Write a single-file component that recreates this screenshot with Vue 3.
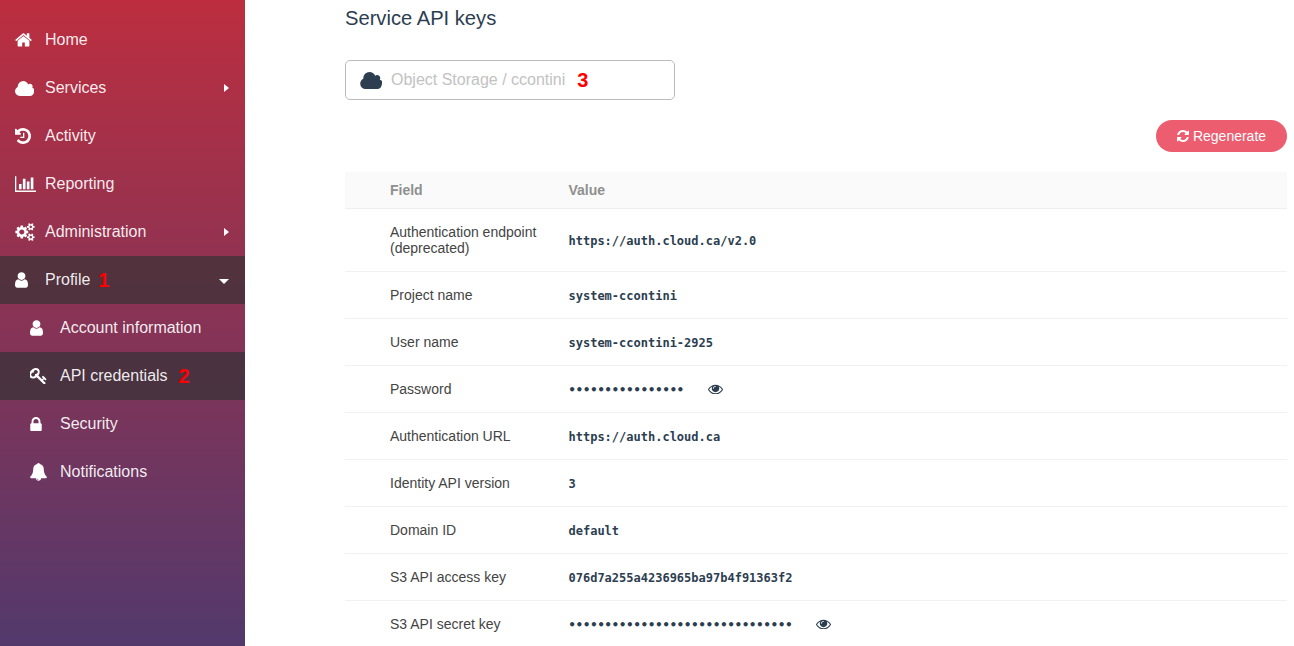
<script setup>
const icons = {
  home: { vb: '64 224 1664 1312', w: 17, h: 13.4, d: 'M1472 992v480q0 26-19 45t-45 19h-384v-384h-256v384h-384q-26 0-45-19t-19-45v-480q0-1 .5-3t.5-3l575-474 575 474q1 2 1 6zm223-69l-62 74q-8 9-21 11h-3q-13 0-21-7l-692-577-692 577q-12 8-24 7-13-2-21-11l-62-74q-8-10-7-23.5t11-21.5l719-599q32-26 76-26t76 26l244 204v-195q0-14 9-23t23-9h192q14 0 23 9t9 23v408l219 182q10 8 11 21.5t-7 23.5z' },
  cloud: { vb: '-64 128 1792 1408', w: 19, h: 15, d: 'M1728 1152q0 159-112.5 271.5t-271.5 112.5h-960q-185 0-316.5-131.5t-131.5-316.5q0-132 71-241.5t187-163.5q-2-28-2-43 0-212 150-362t362-150q158 0 286.5 88t187.5 230q70-62 166-62 106 0 181 75t75 181q0 75-41 138 129 30 213 134.5t84 239.5z' },
  history: { vb: '128 128 1536 1536', w: 16, h: 16, d: 'M1664 896q0 156-61 298t-164 245-245 164-298 61q-172 0-327-72.5t-264-204.5q-7-10-6.5-22.5t8.5-20.5l137-138q10-9 25-9 16 2 23 12 73 95 179 147t225 52q104 0 198.5-40.5t163.5-109.5 109.5-163.5 40.5-198.5-40.5-198.5-109.5-163.5-163.5-109.5-198.5-40.5q-98 0-188 35.5t-160 101.5l137 138q31 30 14 69-17 40-59 40h-448q-26 0-45-19t-19-45v-448q0-42 40-59 39-17 69 14l130 129q107-101 244.5-156.5t284.5-55.5q156 0 298 61t245 164 164 245 61 298zm-640-288v448q0 14-9 23t-23 9h-320q-14 0-23-9t-9-23v-64q0-14 9-23t23-9h224v-352q0-14 9-23t23-9h64q14 0 23 9t9 23z' },
  chart: { vb: '0 128 2048 1536', w: 21, h: 16, d: 'M640 896v512h-256v-512h256zm384-512v1024h-256v-1024h256zm1024 1152v128h-2048v-1536h128v1408h1920zm-640-896v768h-256v-768h256zm384-384v1152h-256v-1152h256z' },
  cogs: { vb: '0 0 1920 1792', w: 20, h: 18, d: 'M896 896q0-106-75-181t-181-75-181 75-75 181 75 181 181 75 181-75 75-181zm768 512q0-52-38-90t-90-38-90 38-38 90q0 53 37.5 90.5t90.5 37.5 90.5-37.5 37.5-90.5zm0-1024q0-52-38-90t-90-38-90 38-38 90q0 53 37.5 90.5t90.5 37.5 90.5-37.5 37.5-90.5zm-384 421v185q0 10-7 19.5t-16 10.5l-155 24q-11 35-32 76 34 48 90 115 7 11 7 20 0 12-7 19-23 30-82.5 89.5t-78.5 59.5q-11 0-21-7l-115-90q-37 19-77 31-11 108-23 155-7 24-30 24h-186q-11 0-20-7.5t-10-17.5l-23-153q-34-10-75-31l-118 89q-7 7-20 7-11 0-21-8-144-133-144-160 0-9 7-19 10-14 41-53t47-61q-23-44-35-82l-152-24q-10-1-17-9.5t-7-19.5v-185q0-10 7-19.5t16-10.5l155-24q11-35 32-76-34-48-90-115-7-11-7-20 0-12 7-20 22-30 82-89t79-59q11 0 21 7l115 90q34-18 77-32 11-108 23-154 7-24 30-24h186q11 0 20 7.5t10 17.5l23 153q34 10 75 31l118-89q8-7 20-7 11 0 21 8 144 133 144 160 0 8-7 19-12 16-42 54t-45 60q23 48 34 82l152 23q10 2 17 10.5t7 19.5zm640 533v140q0 16-149 31-12 27-30 52 51 113 51 138 0 4-4 7-122 71-124 71-8 0-46-47t-52-68q-20 2-30 2t-30-2q-14 21-52 68t-46 47q-2 0-124-71-4-3-4-7 0-25 51-138-18-25-30-52-149-15-149-31v-140q0-16 149-31 13-29 30-52-51-113-51-138 0-4 4-7 4-2 35-20t59-34 30-16q8 0 46 46.5t52 67.5q20-2 30-2t30 2q51-71 92-112l6-2q4 0 124 70 4 3 4 7 0 25-51 138 17 23 30 52 149 15 149 31zm0-1024v140q0 16-149 31-12 27-30 52 51 113 51 138 0 4-4 7-122 71-124 71-8 0-46-47t-52-68q-20 2-30 2t-30-2q-14 21-52 68t-46 47q-2 0-124-71-4-3-4-7 0-25 51-138-18-25-30-52-149-15-149-31v-140q0-16 149-31 13-29 30-52-51-113-51-138 0-4 4-7 4-2 35-20t59-34 30-16q8 0 46 46.5t52 67.5q20-2 30-2t30 2q51-71 92-112l6-2q4 0 124 70 4 3 4 7 0 25-51 138 17 23 30 52 149 15 149 31z' },
  user: { vb: '256 128 1280 1536', w: 13, h: 16, d: 'M1536 1399q0 109-62.5 187t-150.5 78h-854q-88 0-150.5-78t-62.5-187q0-85 8.5-160.5t31.5-152 58.5-131 94-89 134.5-34.5q131 128 313 128t313-128q76 0 134.5 34.5t94 89 58.5 131 31.5 152 8.5 160.5zm-256-887q0 159-112.5 271.5t-271.5 112.5-271.5-112.5-112.5-271.5 112.5-271.5 271.5-112.5 271.5 112.5 112.5 271.5z' },
  key: { vb: '128 128 1555 1555', w: 17, h: 16, d: 'M832 512q0-80-56-136t-136-56-136 56-56 136q0 42 19 83-41-19-83-19-80 0-136 56t-56 136 56 136 136 56 136-56 56-136q0-42-19-83 41 19 83 19 80 0 136-56t56-136zm851 704q0 17-49 66t-66 49q-9 0-28.5-16t-36.5-33-38.5-40-24.5-26l-96 96 220 220q28 28 28 68 0 42-39 81t-81 39q-40 0-68-28l-671-671q-176 131-365 131-163 0-265.5-102.5t-102.5-265.5q0-160 95-313t248-248 313-95q163 0 265.5 102.5t102.5 265.5q0 189-131 365l355 355 96-96q-3-3-26-24.5t-40-38.5-33-36.5-16-28.5q0-17 49-66t66-49q13 0 23 10 6 6 46 44.5t82 79.5 86.5 86 73 78 28.5 41z' },
  lock: { vb: '320 128 1152 1408', w: 12, h: 14, d: 'M640 768h512v-192q0-106-75-181t-181-75-181 75-75 181v192zm832 96v576q0 40-28 68t-68 28h-960q-40 0-68-28t-28-68v-576q0-40 28-68t68-28h32v-192q0-184 132-316t316-132 316 132 132 316v192h32q40 0 68 28t28 68z' },
  bell: { vb: '64 64 1664 1728', w: 17, h: 18, d: 'M912 1696q0-16-16-16-59 0-101.5-42.5t-42.5-101.5q0-16-16-16t-16 16q0 73 51.5 124.5t124.5 51.5q16 0 16-16zm816-288q0 52-38 90t-90 38h-448q0 106-75 181t-181 75-181-75-75-181h-448q-52 0-90-38t-38-90q50-42 91-88t85-119.5 74.5-158.5 50-206 19.5-260q0-152 117-282.5t307-158.5q-8-19-8-39 0-40 28-68t68-28 68 28 28 68q0 20-8 39 190 28 307 158.5t117 282.5q0 139 19.5 260t50 206 74.5 158.5 85 119.5 91 88z' },
  refresh: { vb: '128 128 1536 1536', w: 12, h: 12, d: 'M1639 1056q0 5-1 7-64 268-268 434.5t-478 166.5q-146 0-282.5-55t-243.5-157l-129 129q-19 19-45 19t-45-19-19-45v-448q0-26 19-45t45-19h448q26 0 45 19t19 45-19 45l-137 137q71 66 161 102t187 36q134 0 250-65t186-179q11-17 53-117 8-23 30-23h192q13 0 22.5 9.5t9.5 22.5zm25-800v448q0 26-19 45t-45 19h-448q-26 0-45-19t-19-45 19-45l138-138q-148-137-349-137-134 0-250 65t-186 179q-11 17-53 117-8 23-30 23h-199q-13 0-22.5-9.5t-9.5-22.5v-7q65-268 270-434.5t480-166.5q146 0 284 55.5t245 156.5l130-129q19-19 45-19t45 19 19 45z' },
  eye: { vb: '0 320 1792 1152', w: 15, h: 10, d: 'M1664 960q-152-236-381-353 61 104 61 225 0 185-131.5 316.5t-316.5 131.5-316.5-131.5-131.5-316.5q0-121 61-225-229 117-381 353 133 205 333.5 326.5t434.5 121.5 434.5-121.5 333.5-326.5zm-720-384q0-20-14-34t-34-14q-125 0-214.5 89.5t-89.5 214.5q0 20 14 34t34 14 34-14 14-34q0-86 61-147t147-61q20 0 34-14t14-34zm848 384q0 34-20 69-140 230-376.5 368.5t-499.5 138.5-499.5-139-376.5-368q-20-35-20-69t20-69q140-229 376.5-368t499.5-139 499.5 139 376.5 368q20 35 20 69z' }
}

const nav = [
  { label: 'Home', icon: 'home' },
  { label: 'Services', icon: 'cloud', caret: 'right' },
  { label: 'Activity', icon: 'history' },
  { label: 'Reporting', icon: 'chart' },
  { label: 'Administration', icon: 'cogs', caret: 'right' },
  { label: 'Profile', icon: 'user', caret: 'down', mark: '1', active: true },
  { label: 'Account information', icon: 'user', sub: true },
  { label: 'API credentials', icon: 'key', sub: true, mark: '2', active: true, gap: true },
  { label: 'Security', icon: 'lock', sub: true },
  { label: 'Notifications', icon: 'bell', sub: true }
]

const rows = [
  { field: 'Authentication endpoint (deprecated)', value: 'https://auth.cloud.ca/v2.0' },
  { field: 'Project name', value: 'system-ccontini' },
  { field: 'User name', value: 'system-ccontini-2925' },
  { field: 'Password', value: '•'.repeat(16), secret: true },
  { field: 'Authentication URL', value: 'https://auth.cloud.ca' },
  { field: 'Identity API version', value: '3' },
  { field: 'Domain ID', value: 'default' },
  { field: 'S3 API access key', value: '076d7a255a4236965ba97b4f91363f2' },
  { field: 'S3 API secret key', value: '•'.repeat(31), secret: true }
]
</script>

<template>
  <div class="page">
    <aside class="sidebar">
      <div
        v-for="item in nav"
        :key="item.label"
        class="nav-item"
        :class="{ sub: item.sub, active: item.active }"
      >
        <span class="nav-icon">
          <svg :viewBox="icons[item.icon].vb" :width="icons[item.icon].w" :height="icons[item.icon].h" fill="currentColor">
            <path :d="icons[item.icon].d" />
          </svg>
        </span>
        <span>{{ item.label }}</span>
        <span v-if="item.mark" class="mark nav-mark" :class="{ wide: item.gap }">{{ item.mark }}</span>
        <span v-if="item.caret" class="caret" :class="item.caret"></span>
      </div>
    </aside>

    <main class="content">
      <h2 class="title">Service API keys</h2>

      <div class="select">
        <svg :viewBox="icons.cloud.vb" width="22" height="17" fill="#2c3e50">
          <path :d="icons.cloud.d" />
        </svg>
        <span class="placeholder">Object Storage / ccontini</span>
        <span class="mark select-mark">3</span>
      </div>

      <div class="actions">
        <button class="regen">
          <svg :viewBox="icons.refresh.vb" :width="icons.refresh.w" :height="icons.refresh.h" fill="currentColor">
            <path :d="icons.refresh.d" />
          </svg>
          Regenerate
        </button>
      </div>

      <table class="keys">
        <thead>
          <tr>
            <th class="col-field">Field</th>
            <th>Value</th>
          </tr>
        </thead>
        <tbody>
          <tr v-for="row in rows" :key="row.field">
            <td class="col-field">{{ row.field }}</td>
            <td class="value">
              <span>{{ row.value }}</span>
              <svg v-if="row.secret" class="eye" :viewBox="icons.eye.vb" :width="icons.eye.w" :height="icons.eye.h" fill="currentColor">
                <path :d="icons.eye.d" />
              </svg>
            </td>
          </tr>
        </tbody>
      </table>
    </main>
  </div>
</template>

<style>
html, body {
  margin: 0;
  overflow: hidden;
}
</style>

<style scoped>
.page {
  display: flex;
  height: 646px;
  overflow: hidden;
  background: #fff;
  font-family: "Liberation Sans", Arial, sans-serif;
}

.sidebar {
  flex: 0 0 245px;
  box-sizing: border-box;
  padding-top: 16px;
  background: linear-gradient(180deg, #bc2e3f 0%, #52396c 100%);
}

.nav-item {
  display: flex;
  align-items: center;
  height: 48px;
  padding-left: 15px;
  color: rgba(255, 255, 255, 0.92);
  font-size: 16px;
}

.nav-item.sub {
  padding-left: 30px;
}

.nav-item.active {
  background: rgba(40, 50, 48, 0.6);
}

.nav-icon {
  display: flex;
  align-items: center;
  flex: 0 0 30px;
  color: #fff;
}

.mark {
  color: #f00;
  font-weight: 700;
  font-size: 20px;
}

.nav-mark {
  margin-left: 8px;
}

.nav-mark.wide {
  margin-left: 11px;
}

.caret {
  margin-left: auto;
  width: 0;
  height: 0;
  border-style: solid;
  border-color: transparent;
}

.caret.right {
  margin-right: 16px;
  border-width: 4.5px 0 4.5px 5px;
  border-left-color: #fff;
}

.caret.down {
  margin-right: 16px;
  margin-top: 3px;
  border-width: 5px 5px 0;
  border-top-color: #fff;
}

.content {
  flex: 1;
  min-width: 0;
  padding: 0 7px 0 100px;
}

.title {
  margin: 0;
  height: 36px;
  line-height: 36px;
  color: #2c3e50;
  font-size: 20.16px;
  font-weight: 400;
}

.select {
  display: flex;
  align-items: center;
  box-sizing: border-box;
  width: 330px;
  height: 40px;
  margin-top: 24px;
  padding-left: 14px;
  border: 1px solid #bbb;
  border-radius: 5px;
}

.placeholder {
  margin-left: 9px;
  color: #c2c2c2;
  font-size: 16px;
}

.select-mark {
  margin-left: 12px;
}

.actions {
  display: flex;
  justify-content: flex-end;
  margin-top: 20px;
}

.regen {
  display: flex;
  align-items: center;
  justify-content: center;
  gap: 4px;
  width: 131px;
  height: 32px;
  padding: 0;
  border: 0;
  border-radius: 16px;
  background: #ec5d70;
  color: #fff;
  font-family: inherit;
  font-size: 14px;
}

.keys {
  width: 100%;
  margin-top: 20px;
  border-collapse: collapse;
  table-layout: fixed;
  font-size: 14px;
  color: #444;
}

.keys th {
  padding: 10px 0;
  line-height: 16px;
  background: #fafafa;
  border-bottom: 1px solid #eee;
  color: #8f8f8f;
  font-weight: 700;
  text-align: left;
}

.keys td {
  padding: 15px 0;
  line-height: 16px;
  border-bottom: 1px solid #f1f1f1;
}

.col-field {
  width: 178.5px;
  padding-left: 45px !important;
}

.keys td.value {
  padding: 16px 0 14px;
  color: #2c3e50;
  font-family: "DejaVu Sans Mono", "Liberation Mono", monospace;
  font-size: 12px;
  font-weight: 700;
  white-space: nowrap;
}

.eye {
  margin-left: 24px;
  vertical-align: 0;
}
</style>
